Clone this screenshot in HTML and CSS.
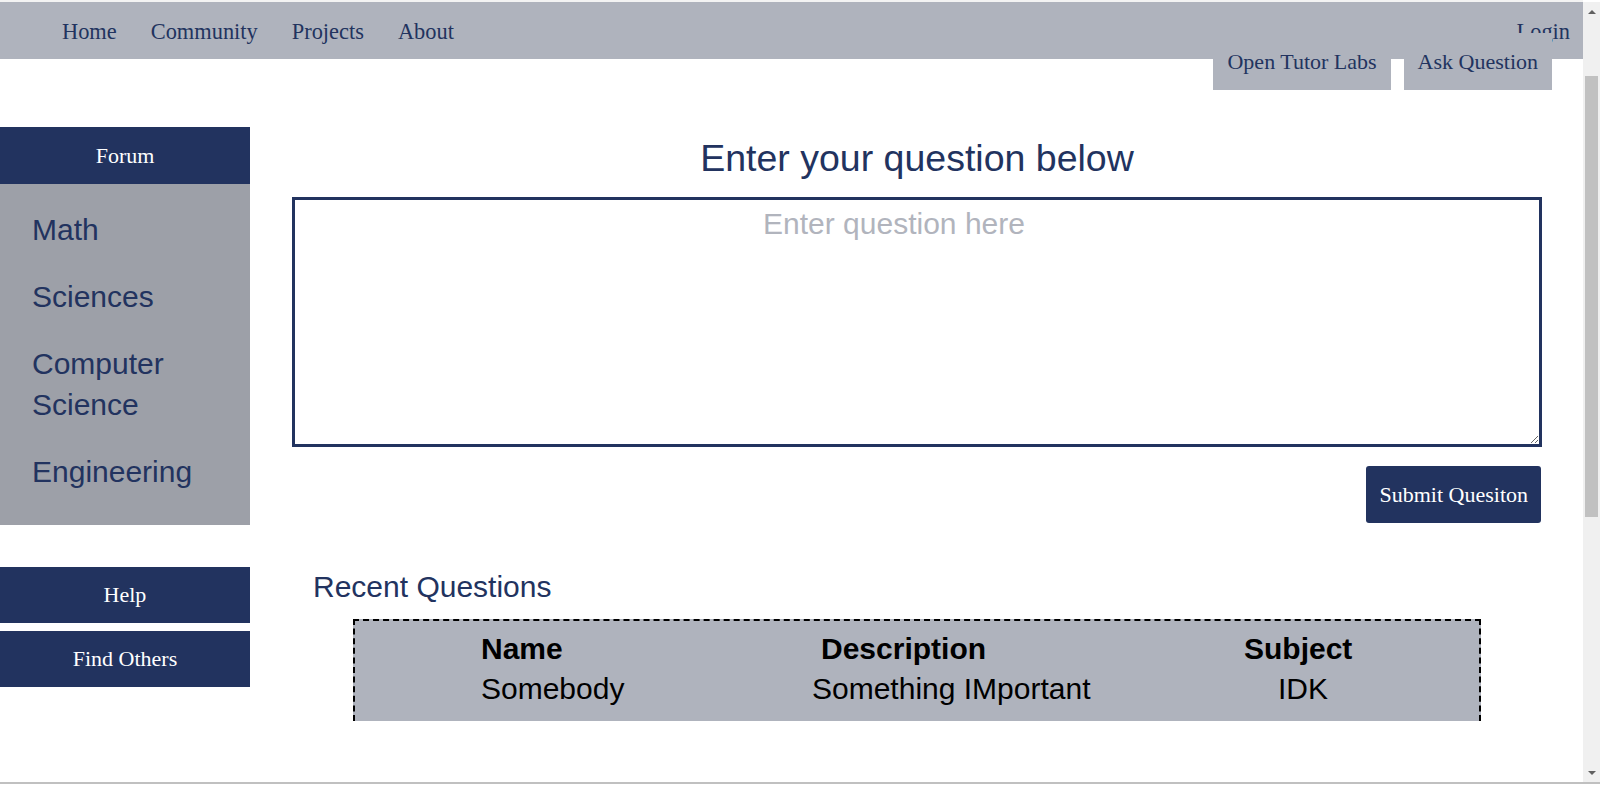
FILE: index.html
```html
<!DOCTYPE html>
<html lang="en">
<head>
<meta charset="utf-8">
<title>Open Tutor Labs - Forum</title>
<link rel="stylesheet" href="styles.css">
</head>
<body>
<div class="page">
  <div class="top-strip"></div>
  <header class="nav">
    <nav class="links">
      <a href="#">Home</a>
      <a href="#">Community</a>
      <a href="#">Projects</a>
      <a href="#">About</a>
    </nav>
    <a class="login" href="#">Login</a>
    <div class="actions">
      <a class="action" href="#">Open Tutor Labs</a>
      <a class="action" href="#">Ask Question</a>
    </div>
  </header>

  <div class="layout">
    <aside class="sidebar">
      <div class="forum">Forum</div>
      <ul class="subjects">
        <li>Math</li>
        <li>Sciences</li>
        <li>Computer Science</li>
        <li>Engineering</li>
      </ul>
      <div class="side-buttons">
        <a class="side-btn" href="#">Help</a>
        <a class="side-btn" href="#">Find Others</a>
      </div>
    </aside>

    <main class="content">
      <h1 class="title">Enter your question below</h1>
      <textarea class="question" placeholder="Enter question here"></textarea>
      <div class="submit-row">
        <button class="submit" type="button">Submit Quesiton</button>
      </div>
      <h2 class="recent-title">Recent Questions</h2>
      <div class="recent">
        <div class="cell head">Name</div>
        <div class="cell head c2h">Description</div>
        <div class="cell head">Subject</div>
        <div class="cell">Somebody</div>
        <div class="cell">Something IMportant</div>
        <div class="cell c3d">IDK</div>
      </div>
    </main>
  </div>
</div>

<div class="scrollbar">
  <div class="arrow-up"></div>
  <div class="thumb"></div>
  <div class="arrow-down"></div>
</div>
<div class="window-edge"></div>
</body>
</html>
```

FILE: styles.css
```css
html, body {
  margin: 0;
  padding: 0;
  background: #ffffff;
  overflow: hidden;
}

.page {
  width: 1583px;
  height: 786px;
  overflow: hidden;
}

.top-strip {
  height: 2px;
  background: #f3f3f3;
}

.nav {
  position: relative;
  height: 57px;
  box-sizing: border-box;
  background: #afb3bd;
  display: flex;
  align-items: flex-start;
  padding: 17px 13px 0 62px;
  font-family: "Liberation Serif", "Times New Roman", serif;
  font-size: 22.4px;
  line-height: 25px;
  z-index: 2;
}

.nav a {
  color: #22335f;
  text-decoration: none;
}

.links {
  display: flex;
  gap: 34px;
}

.login {
  margin-left: auto;
}

.actions {
  position: absolute;
  top: 31px;
  right: 31px;
  display: flex;
  gap: 13px;
  font-size: 22px;
}

.action {
  height: 57px;
  padding: 0 14px;
  background: #afb3bd;
  display: flex;
  align-items: center;
}

.layout {
  display: flex;
}

.sidebar {
  width: 250px;
  flex: none;
  margin-top: 68px;
}

.forum {
  height: 57px;
  line-height: 57px;
  background: #22335f;
  color: #ffffff;
  text-align: center;
  font-family: "Liberation Serif", "Times New Roman", serif;
  font-size: 22px;
}

.subjects {
  list-style: none;
  margin: 0;
  padding: 25px 0 33px 32px;
  background: #9da0a8;
  display: flex;
  flex-direction: column;
  gap: 26px;
  font-family: "Liberation Sans", Arial, sans-serif;
  font-size: 30px;
  line-height: 41px;
  color: #22335f;
}

.side-buttons {
  margin-top: 42px;
  display: flex;
  flex-direction: column;
  gap: 8px;
}

.side-btn {
  height: 56px;
  display: flex;
  align-items: center;
  justify-content: center;
  background: #22335f;
  color: #ffffff;
  text-decoration: none;
  font-family: "Liberation Serif", "Times New Roman", serif;
  font-size: 22px;
}

.content {
  flex: 1;
  padding: 78px 41px 0 42px;
  font-family: "Liberation Sans", Arial, sans-serif;
  color: #22335f;
}

.title {
  margin: 0;
  font-size: 37.5px;
  font-weight: normal;
  text-align: center;
  line-height: normal;
}

.question {
  display: block;
  width: 1250px;
  height: 250px;
  box-sizing: border-box;
  margin-top: 17px;
  border: 3px solid #22335f;
  border-radius: 0;
  padding: 7px 48px 2px 2px;
  font-family: "Liberation Sans", Arial, sans-serif;
  font-size: 30px;
  text-align: center;
  color: #22335f;
  outline: none;
}

.question::placeholder {
  color: #b1b4bd;
  opacity: 1;
}

.submit-row {
  display: flex;
  justify-content: flex-end;
  margin-top: 19px;
  padding-right: 1px;
}

.submit {
  height: 57px;
  padding: 0 13px;
  border: none;
  border-radius: 3px;
  background: #22335f;
  color: #ffffff;
  font-family: "Liberation Serif", "Times New Roman", serif;
  font-size: 22px;
}

.recent-title {
  margin: 47px 0 0 0;
  padding-left: 21px;
  font-size: 30px;
  font-weight: normal;
  line-height: normal;
}

.recent {
  margin: 15px 61px 0 61px;
  border: 2px dashed #000000;
  border-bottom: none;
  background: #afb3bd;
  padding: 11px 0 15px 126px;
  display: grid;
  grid-template-columns: 331px 432px 1fr;
  row-gap: 6px;
  color: #000000;
  font-size: 30px;
  line-height: normal;
}

.cell.head {
  font-weight: bold;
}

.c2h {
  padding-left: 9px;
}

.c3d {
  padding-left: 34px;
}

.scrollbar {
  position: fixed;
  top: 2px;
  right: 0;
  bottom: 3px;
  width: 17px;
  background: #f0f0f0;
}

.thumb {
  position: absolute;
  top: 74px;
  left: 2px;
  width: 13px;
  height: 441px;
  background: #c1c1c1;
}

.arrow-up,
.arrow-down {
  position: absolute;
  left: 5px;
  width: 0;
  height: 0;
  border-left: 4px solid transparent;
  border-right: 4px solid transparent;
}

.arrow-up {
  top: 8px;
  border-bottom: 4px solid #606060;
}

.arrow-down {
  bottom: 8px;
  border-top: 4px solid #606060;
}

.window-edge {
  position: fixed;
  left: 0;
  right: 0;
  bottom: 2px;
  height: 2px;
  background: #c0c0c0;
}
```
